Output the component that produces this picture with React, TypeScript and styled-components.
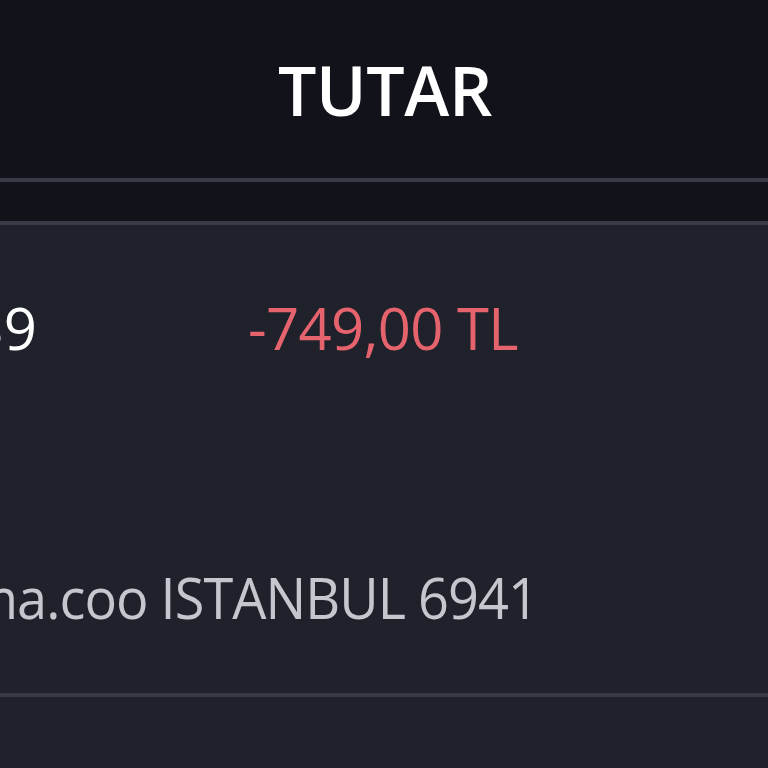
import React from 'react';
import styled, { createGlobalStyle } from 'styled-components';

const GlobalStyle = createGlobalStyle`
    html, body {
        margin: 0;
        padding: 0;
        background: #1f212b;
        overflow: hidden;
    }
    body {
        font-family: "Open Sans", "Noto Sans", sans-serif;
    }
`;

const rows = [
    {
        time: '14:39',
        amount: '-749,00 TL',
        desc: 'Online Ödeme Pazarlama.coo ISTANBUL 6941',
    },
];

export default function App() {
    return (
        <>
            <GlobalStyle />
            <Frame>
                <Table>
                    <HeaderRow>
                        <HeadCell />
                        <HeadCell>TUTAR</HeadCell>
                        <HeadCell />
                    </HeaderRow>
                    <FilterBand />
                    {rows.map((row, i) => (
                        <Row key={i}>
                            <TimeCell>{row.time}</TimeCell>
                            <AmountCell negative={row.amount.startsWith('-')}>
                                {row.amount}
                            </AmountCell>
                            <DescLine>
                                <DescText>{row.desc}</DescText>
                            </DescLine>
                        </Row>
                    ))}
                    <Row />
                </Table>
            </Frame>
        </>
    );
}

const Frame = styled.div`
    width: 768px;
    height: 768px;
    overflow: hidden;
    background: #1f212b;
`;

const Table = styled.div`
    width: 1068px;
    margin-left: -300px;
`;

const HeaderRow = styled.div`
    display: grid;
    grid-template-columns: 360px 648px 60px;
    height: 178px;
    align-items: center;
    background: #12121a;
    border-bottom: 4px solid #393a46;
`;

const HeadCell = styled.div`
    text-align: center;
    color: #ffffff;
    font-size: 68px;
    font-weight: 600;
    letter-spacing: -0.3px;
    padding-left: 2px;
`;

const FilterBand = styled.div`
    height: 39px;
    background: #12121a;
    border-bottom: 4px solid #393a46;
`;

const Row = styled.div`
    display: grid;
    grid-template-columns: 360px 648px 60px;
    grid-template-rows: 204px 1fr;
    min-height: 468px;
    background: #1f212b;
    border-bottom: 4px solid #393a46;
    &:last-child {
        border-bottom: none;
    }
`;

const TimeCell = styled.div`
    display: flex;
    align-items: center;
    justify-content: flex-end;
    padding-right: 23px;
    color: #ffffff;
    font-size: 58px;
    font-weight: 400;
`;

const AmountCell = styled.div<{ negative?: boolean }>`
    display: flex;
    align-items: center;
    justify-content: center;
    padding-right: 2px;
    color: ${(p) => (p.negative ? '#e4636c' : '#4fc38a')};
    font-size: 58px;
    font-weight: 400;
    letter-spacing: -0.7px;
`;

const DescLine = styled.div`
    grid-column: 1 / -1;
    display: flex;
    justify-content: flex-end;
    width: 838px;
    padding-top: 130px;
    white-space: nowrap;
    color: #c5c7ce;
    font-size: 56px;
    font-weight: 400;
    letter-spacing: -1px;
`;

const DescText = styled.span`
    display: inline-block;
    transform: scaleX(0.966);
    transform-origin: right center;
`;
